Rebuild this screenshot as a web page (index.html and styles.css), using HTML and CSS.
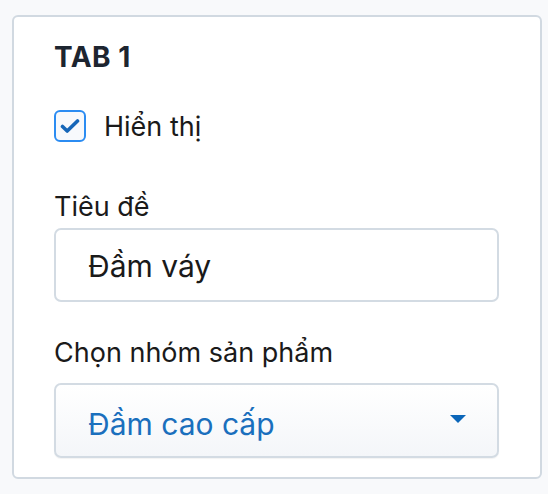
FILE: index.html
```html
<!DOCTYPE html>
<html lang="vi">
<head>
<meta charset="utf-8">
<title>Tab 1</title>
<link rel="stylesheet" href="styles.css">
</head>
<body>
  <section class="card">
    <h2 class="card-title">TAB 1</h2>
    <label class="check-row">
      <span class="checkbox">
        <svg viewBox="0 0 20 16" width="20" height="16" aria-hidden="true">
          <path d="M2.5 8.5 L7.2 13 L17.5 3" fill="none" stroke="#1666b8" stroke-width="3.6" stroke-linecap="round" stroke-linejoin="round"/>
        </svg>
      </span>
      <span class="check-label">Hiển thị</span>
    </label>
    <div class="field field-title">
      <div class="field-label">Tiêu đề</div>
      <div class="input">Đầm váy</div>
    </div>
    <div class="field field-group">
      <div class="field-label">Chọn nhóm sản phẩm</div>
      <div class="select">
        <span class="select-value">Đầm cao cấp</span>
        <span class="select-arrow"></span>
      </div>
    </div>
  </section>
</body>
</html>
```

FILE: styles.css
```css
html, body {
  margin: 0;
  padding: 0;
}

body {
  background: #f8f9fb;
  padding: 15px 6px 0 12px;
  font-family: Inter, "Noto Sans", "DejaVu Sans", sans-serif;
  font-size: 27px;
  color: #1a1a1a;
}

.card {
  box-sizing: border-box;
  width: 530px;
  height: 464px;
  background: #ffffff;
  border: 2px solid #d1d9e1;
  border-radius: 6px;
  padding: 23px 41px 0 40px;
}

.card-title {
  margin: 0;
  font-size: 28px;
  line-height: 34px;
  font-weight: 700;
  letter-spacing: 0.5px;
  color: #1d2530;
}

.check-row {
  display: flex;
  align-items: center;
  gap: 18px;
  margin-top: 36px;
  height: 32px;
}

.checkbox {
  box-sizing: border-box;
  width: 32px;
  height: 32px;
  border: 2px solid #2b8cf2;
  border-radius: 6px;
  background: #f7f9fc;
  display: flex;
  align-items: center;
  justify-content: center;
}

.check-label {
  line-height: 34px;
  padding-top: 2px;
}

.field-label {
  line-height: 34px;
}

.field-title {
  margin-top: 48px;
}

.field-group {
  margin-top: 34px;
}

.input,
.select {
  box-sizing: border-box;
  width: 445px;
  margin-top: 4px;
  border: 2px solid #d3dbe3;
  border-radius: 7px;
  padding: 0 31px 0 32px;
  display: flex;
  align-items: center;
  font-size: 30px;
}

.input {
  height: 74px;
  background: #ffffff;
  line-height: 34px;
  padding-top: 2px;
}

.select {
  height: 75px;
  margin-top: 13px;
  background: linear-gradient(#ffffff, #f4f6f9);
  box-shadow: 0 1px 1px rgba(0, 0, 0, 0.05);
  justify-content: space-between;
}

.select-value {
  color: #1a6fbd;
  line-height: 34px;
  padding-top: 7px;
}

.select-arrow {
  width: 0;
  height: 0;
  border-left: 8px solid transparent;
  border-right: 8px solid transparent;
  border-top: 8px solid #0b66b9;
  margin-top: -3px;
}
```
